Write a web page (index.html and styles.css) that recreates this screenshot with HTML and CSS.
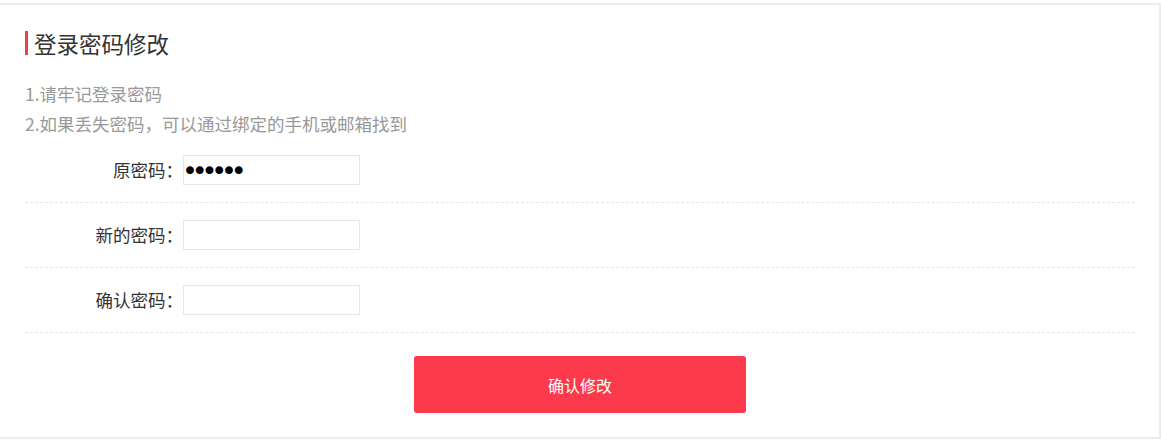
FILE: index.html
```html
<!DOCTYPE html>
<html lang="zh-CN">
<head>
<meta charset="utf-8">
<title>登录密码修改</title>
<link rel="stylesheet" href="styles.css">
</head>
<body>
<div class="panel">
  <h2 class="title">登录密码修改</h2>
  <div class="notes">
    <p>1.请牢记登录密码</p>
    <p>2.如果丢失密码，可以通过绑定的手机或邮箱找到</p>
  </div>
  <form class="form">
    <div class="row">
      <label class="label">原密码：</label>
      <input class="field" type="password" value="123456">
    </div>
    <div class="row">
      <label class="label">新的密码：</label>
      <input class="field" type="password">
    </div>
    <div class="row">
      <label class="label">确认密码：</label>
      <input class="field" type="password">
    </div>
    <div class="actions">
      <button class="submit" type="button">确认修改</button>
    </div>
  </form>
</div>
</body>
</html>
```
FILE: styles.css
```css
html, body {
  margin: 0;
  padding: 0;
  background: #fff;
}
body {
  font-family: "Noto Sans CJK SC", "Noto Sans", sans-serif;
  color: #333;
}
.panel {
  box-sizing: border-box;
  width: 1161px;
  height: 436px;
  margin-top: 3px;
  border: 2px solid #ececec;
  border-left: 0;
  padding: 26px 24px 0 25px;
  background: #fff;
}
.title {
  margin: 0;
  padding-left: 6px;
  border-left: 3px solid #e8424f;
  font-size: 22.5px;
  font-weight: normal;
  line-height: 24px;
  color: #333;
}
.notes {
  margin-top: 24px;
  color: #999;
  font-size: 17.5px;
  line-height: 30px;
}
.notes p {
  margin: 0;
}
.form {
  margin: -1px 0 0;
}
.row {
  display: flex;
  align-items: center;
  padding: 17px 0;
  border-bottom: 1px dashed #e8e8e8;
}
.label {
  width: 158px;
  text-align: right;
  font-size: 17.5px;
  color: #333;
  line-height: 30px;
}
.field {
  box-sizing: border-box;
  width: 177px;
  height: 30px;
  margin: 0;
  padding: 0;
  border: 1px solid #e6e6e6;
  outline: none;
  font-family: "DejaVu Sans", sans-serif;
  font-size: 27px;
  letter-spacing: -6.2px;
  text-indent: -2px;
  color: #000;
}
.actions {
  display: flex;
  justify-content: center;
  padding-top: 23px;
}
.submit {
  width: 332px;
  height: 57px;
  border: 0;
  border-radius: 3px;
  background: #fc3a4c;
  color: #fff;
  font-family: "Noto Sans CJK SC", sans-serif;
  font-size: 16px;
  cursor: pointer;
}
```
